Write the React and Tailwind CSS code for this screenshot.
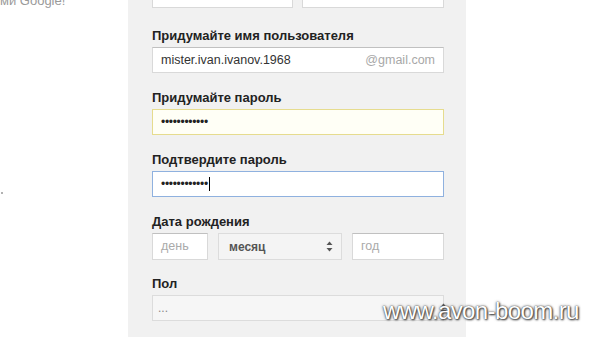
import React from 'react';

function Arrows({ className = '' }) {
    return (
        <svg width="7" height="11" viewBox="0 0 7 11" className={className}>
            <path d="M3.5 0.5 L6.5 4 L0.5 4 Z" fill="#555" />
            <path d="M3.5 10.5 L6.5 7 L0.5 7 Z" fill="#555" />
        </svg>
    );
}

function Label({ children }) {
    return (
        <div className="text-[13px] leading-4 font-bold text-[#222] mb-[3px]">{children}</div>
    );
}

const box = 'h-[26px] bg-white border border-[#d9d9d9] border-t-[#c0c0c0] flex items-center px-[8px] text-[12.5px] text-[#333]';

export default function App() {
    return (
        <div className="relative w-[600px] h-[337px] overflow-hidden bg-white flex font-['Liberation_Sans',Arial,sans-serif]">
            {/* left page column, text cut off */}
            <div className="w-[128px] shrink-0 flex flex-col">
                <div className="mt-[-7px] text-[13px] leading-4 text-[#9a9a9a] whitespace-nowrap">ми Google!</div>
                <div className="mt-[183px] ml-[1px] w-[2px] h-[2px] rounded-full bg-[#999]"></div>
            </div>

            {/* registration form */}
            <div className="w-[338px] shrink-0 bg-[#f1f1f1] pl-[24px] pr-[22px] flex flex-col">
                <div className="mt-[-18px] mb-[20px] flex gap-[9px]">
                    <div className={`${box} w-[141px] items-end pb-[2px]`}>Иван</div>
                    <div className={`${box} w-[142px] items-end pb-[2px]`}>Иванов</div>
                </div>

                <Label>Придумайте имя пользователя</Label>
                <div className={`${box} justify-between mb-[17px]`}>
                    <span>mister.ivan.ivanov.1968</span>
                    <span className="text-[#a8a8a8]">@gmail.com</span>
                </div>

                <Label>Придумайте пароль</Label>
                <div className="h-[26px] bg-[#fffff6] border border-[#e6dc8e] flex items-center px-[8px] text-[12px] text-[#222] mb-[17px]">
                    <span className="tracking-[-0.3px]">••••••••••••</span>
                </div>

                <Label>Подтвердите пароль</Label>
                <div className="h-[26px] bg-white border border-[#8fb1df] flex items-center px-[8px] text-[12px] text-[#222] mb-[17px]">
                    <span className="tracking-[-0.3px]">••••••••••••</span>
                    <span className="w-[1px] h-[14px] bg-black ml-[1px]"></span>
                </div>

                <Label>Дата рождения</Label>
                <div className="flex gap-[10px] mb-[16px]">
                    <div className={`${box} w-[56px] h-[27px] text-[#aaa]`}>день</div>
                    <div className="w-[124px] h-[27px] bg-[#f4f4f4] border border-[#dcdcdc] flex items-center justify-between pl-[10px] pr-[8px] text-[12px] font-bold text-[#555]">
                        <span>месяц</span>
                        <Arrows />
                    </div>
                    <div className={`${box} w-[92px] h-[27px] text-[#aaa]`}>год</div>
                </div>

                <Label>Пол</Label>
                <div className="h-[26px] bg-[#f6f6f6] border border-[#dcdcdc] flex items-center justify-between pl-[5px] pr-[0px] text-[12px] text-[#888]">
                    <span>...</span>
                    <Arrows className="mr-[-4px]" />
                </div>
            </div>

            <div className="flex-1 bg-white"></div>

            {/* watermark */}
            <div className="absolute left-[383px] top-[297px] text-[24px] leading-7 text-white whitespace-nowrap tracking-[-0.6px] [text-shadow:0_0_1px_#444,1px_1px_2px_#333,0_0_3px_#666]">
                www.avon-boom.ru
            </div>
        </div>
    );
}
